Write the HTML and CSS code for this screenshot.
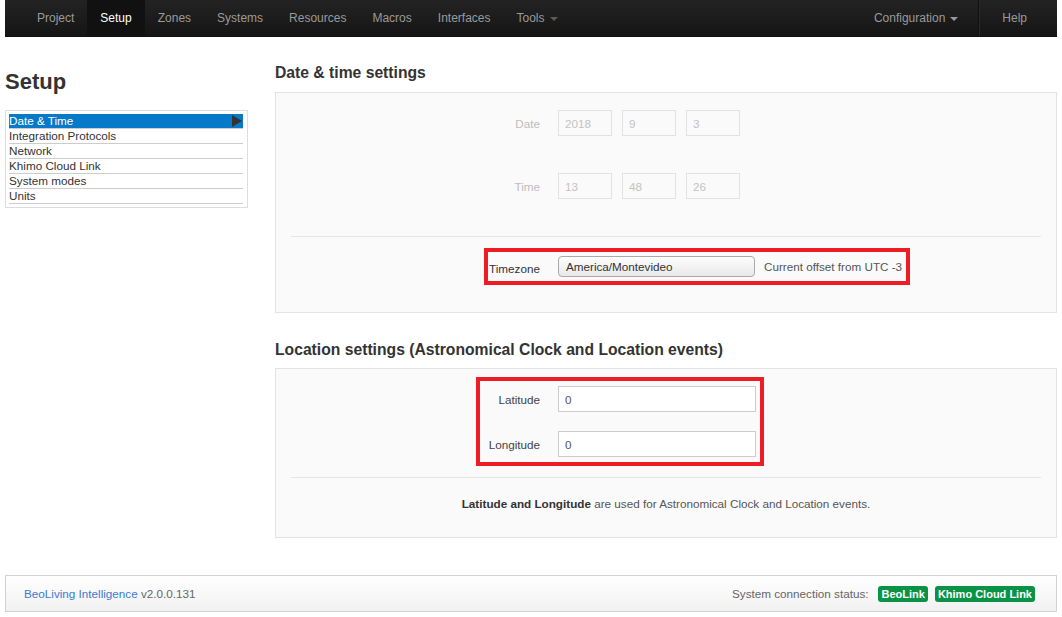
FILE: index.html
```html
<!DOCTYPE html>
<html lang="en">
<head>
<meta charset="utf-8">
<title>Setup - Date &amp; Time</title>
<link rel="stylesheet" href="styles.css">
</head>
<body>
<nav class="navbar">
  <ul class="nav">
    <li><a href="#">Project</a></li>
    <li class="active"><a href="#">Setup</a></li>
    <li><a href="#">Zones</a></li>
    <li><a href="#">Systems</a></li>
    <li><a href="#">Resources</a></li>
    <li><a href="#">Macros</a></li>
    <li><a href="#">Interfaces</a></li>
    <li><a href="#" class="dim">Tools<b class="caret caret-dim"></b></a></li>
  </ul>
  <ul class="nav">
    <li><a href="#">Configuration<b class="caret"></b></a></li>
    <li class="divider"></li>
    <li><a href="#">Help</a></li>
  </ul>
</nav>

<div class="page">
  <aside class="sidebar">
    <h1 class="page-title">Setup</h1>
    <ul class="side-list">
      <li class="selected">Date &amp; Time<span class="arrow"></span></li>
      <li>Integration Protocols</li>
      <li>Network</li>
      <li>Khimo Cloud Link</li>
      <li>System modes</li>
      <li>Units</li>
    </ul>
  </aside>

  <main class="main">
    <h2 class="section-title first">Date &amp; time settings</h2>
    <section class="panel panel-date">
      <div class="form-row">
        <label class="ctl-label disabled">Date</label>
        <div class="controls">
          <input class="field small" type="text" value="2018" disabled>
          <input class="field small" type="text" value="9" disabled>
          <input class="field small" type="text" value="3" disabled>
        </div>
      </div>
      <div class="form-row row-time">
        <label class="ctl-label disabled">Time</label>
        <div class="controls">
          <input class="field small" type="text" value="13" disabled>
          <input class="field small" type="text" value="48" disabled>
          <input class="field small" type="text" value="26" disabled>
        </div>
      </div>
      <hr class="sep sep-date">
      <div class="mark mark-tz">
        <span class="tz-label">Timezone</span>
        <div class="select">America/Montevideo</div>
        <span class="tz-offset">Current offset from UTC -3</span>
      </div>
    </section>

    <h2 class="section-title second">Location settings (Astronomical Clock and Location events)</h2>
    <section class="panel panel-loc">
      <div class="mark mark-loc">
        <label class="loc-label">Latitude</label>
        <input class="field wide" type="text" value="0">
        <label class="loc-label">Longitude</label>
        <input class="field wide" type="text" value="0">
      </div>
      <hr class="sep sep-loc">
      <p class="note"><strong>Latitude and Longitude</strong> are used for Astronomical Clock and Location events.</p>
    </section>
  </main>
</div>

<footer class="footer">
  <div class="version"><a href="#">BeoLiving Intelligence</a> v2.0.0.131</div>
  <div class="status">
    <span class="status-label">System connection status:</span>
    <span class="badge">BeoLink</span>
    <span class="badge">Khimo Cloud Link</span>
  </div>
</footer>
</body>
</html>
```

FILE: styles.css
```css
* { box-sizing: border-box; }

html, body {
  margin: 0;
  padding: 0;
  background: #fff;
}

body {
  font-family: "Liberation Sans", Arial, Helvetica, sans-serif;
  font-size: 12px;
  color: #333;
  padding: 0 5px;
}

a { text-decoration: none; }

/* ---------- navbar ---------- */
.navbar {
  display: flex;
  justify-content: space-between;
  height: 37px;
  padding: 0 17px 0 19px;
  background: linear-gradient(#232323, #151515);
  border-bottom: 1px solid #101010;
}

.nav {
  display: flex;
  list-style: none;
  margin: 0;
  padding: 0;
}

.nav li a {
  display: flex;
  align-items: center;
  height: 36px;
  padding: 0 13px;
  color: #9a9a9a;
  font-size: 12px;
}

.nav li.active a {
  background: #111;
  color: #fff;
}

.caret {
  display: inline-block;
  width: 0;
  height: 0;
  margin-left: 5px;
  margin-top: 1px;
  border-top: 4px solid #9a9a9a;
  border-left: 4px solid transparent;
  border-right: 4px solid transparent;
}

.caret-dim { border-top-color: #5a5a5a; }

.nav .divider {
  width: 2px;
  height: 36px;
  margin: 0 9px 0 7px;
  border-left: 1px solid #101010;
  border-right: 1px solid #2a2a2a;
}

/* ---------- layout ---------- */
.page {
  display: flex;
  gap: 27px;
  font-size: 11.7px;
}

.sidebar {
  width: 243px;
  flex: none;
}

.main {
  flex: 1;
}

.page-title {
  margin: 33px 0 16px;
  font-size: 22px;
  line-height: 24px;
  font-weight: bold;
  color: #333;
}

.side-list {
  list-style: none;
  margin: 0;
  padding: 3px 4px 3px 3px;
  border: 1px solid #ddd;
}

.side-list li {
  position: relative;
  line-height: 14px;
  color: #333;
  border-bottom: 1px solid #ccc;
}

.side-list li.selected {
  background: #0779c9;
  color: #fff;
}

.arrow {
  position: absolute;
  right: 1px;
  top: 1px;
  width: 0;
  height: 0;
  border-left: 10px solid #333;
  border-top: 6px solid transparent;
  border-bottom: 6px solid transparent;
}

/* ---------- sections ---------- */
.section-title {
  font-size: 15.7px;
  line-height: 20px;
  font-weight: bold;
  color: #333;
  margin: 0;
}

.section-title.first { margin: 26px 0 9px; }
.section-title.second { margin: 27px 0 8px; }

.panel {
  background: #fafafa;
  border: 1px solid #e3e3e3;
  padding: 17px 15px 27px;
}

.panel-loc { padding: 8px 15px 24px; }

.form-row {
  display: grid;
  grid-template-columns: 249px auto;
  column-gap: 18px;
  align-items: center;
}

.row-time { margin-top: 37px; }

.ctl-label { text-align: right; }

.ctl-label.disabled { color: #bdbdbd; }

.controls {
  display: flex;
  gap: 10px;
}

.field {
  height: 26px;
  padding: 0 6px;
  font-family: inherit;
  font-size: 11.7px;
  border: 1px solid #ccc;
  background: #fff;
  color: #555;
  outline: none;
  margin: 0;
}

.field.small {
  width: 54px;
  border-color: #e2e2e2;
  background: #fafafa;
  color: #c3c3c3;
}

.field.wide { width: 198px; }

.sep {
  border: 0;
  border-top: 1px solid #e6e6e6;
  margin: 0;
}

.sep-date { margin-top: 37px; }
.sep-loc { margin-top: 11px; }

/* red annotation boxes */
.mark {
  border: 4px solid #ee1c25;
  width: fit-content;
}

.mark-tz {
  display: flex;
  align-items: center;
  height: 37px;
  margin: 11px 0 0 193px;
  padding: 0 4px 0 1px;
}

.tz-label {
  width: 53px;
  margin-top: 3px;
}

.select {
  margin-left: 16px;
  width: 197px;
  height: 21px;
  line-height: 19px;
  padding: 0 7px;
  border: 1px solid #a9a9a9;
  border-radius: 4px;
  background: linear-gradient(#fdfdfd, #e9e9e9);
  color: #333;
}

.tz-offset {
  margin-left: 9px;
  color: #555;
}

.mark-loc {
  display: grid;
  grid-template-columns: 60px 198px;
  column-gap: 18px;
  row-gap: 19px;
  align-items: center;
  padding: 5px 4px 5px 0;
  margin-left: 185px;
}

.loc-label {
  text-align: right;
  color: #444;
}

.note {
  margin: 17px 0 0;
  text-align: center;
  line-height: 18px;
  color: #555;
}

.note strong { color: #333; }

/* ---------- footer ---------- */
.footer {
  display: flex;
  justify-content: space-between;
  align-items: center;
  height: 37px;
  margin-top: 37px;
  padding: 0 21px 0 18px;
  border: 1px solid #d2d2d2;
  background: linear-gradient(#ffffff, #f1f1f1);
  color: #666;
  font-size: 11.7px;
}

.version a { color: #3f7ad1; }

.status {
  display: flex;
  align-items: center;
  gap: 7px;
}

.status-label { margin-right: 3px; color: #666; }

.badge {
  display: inline-block;
  padding: 0 3px;
  line-height: 16px;
  font-size: 11px;
  font-weight: bold;
  color: #fff;
  background: #0a9346;
  border-radius: 3px;
}
```
